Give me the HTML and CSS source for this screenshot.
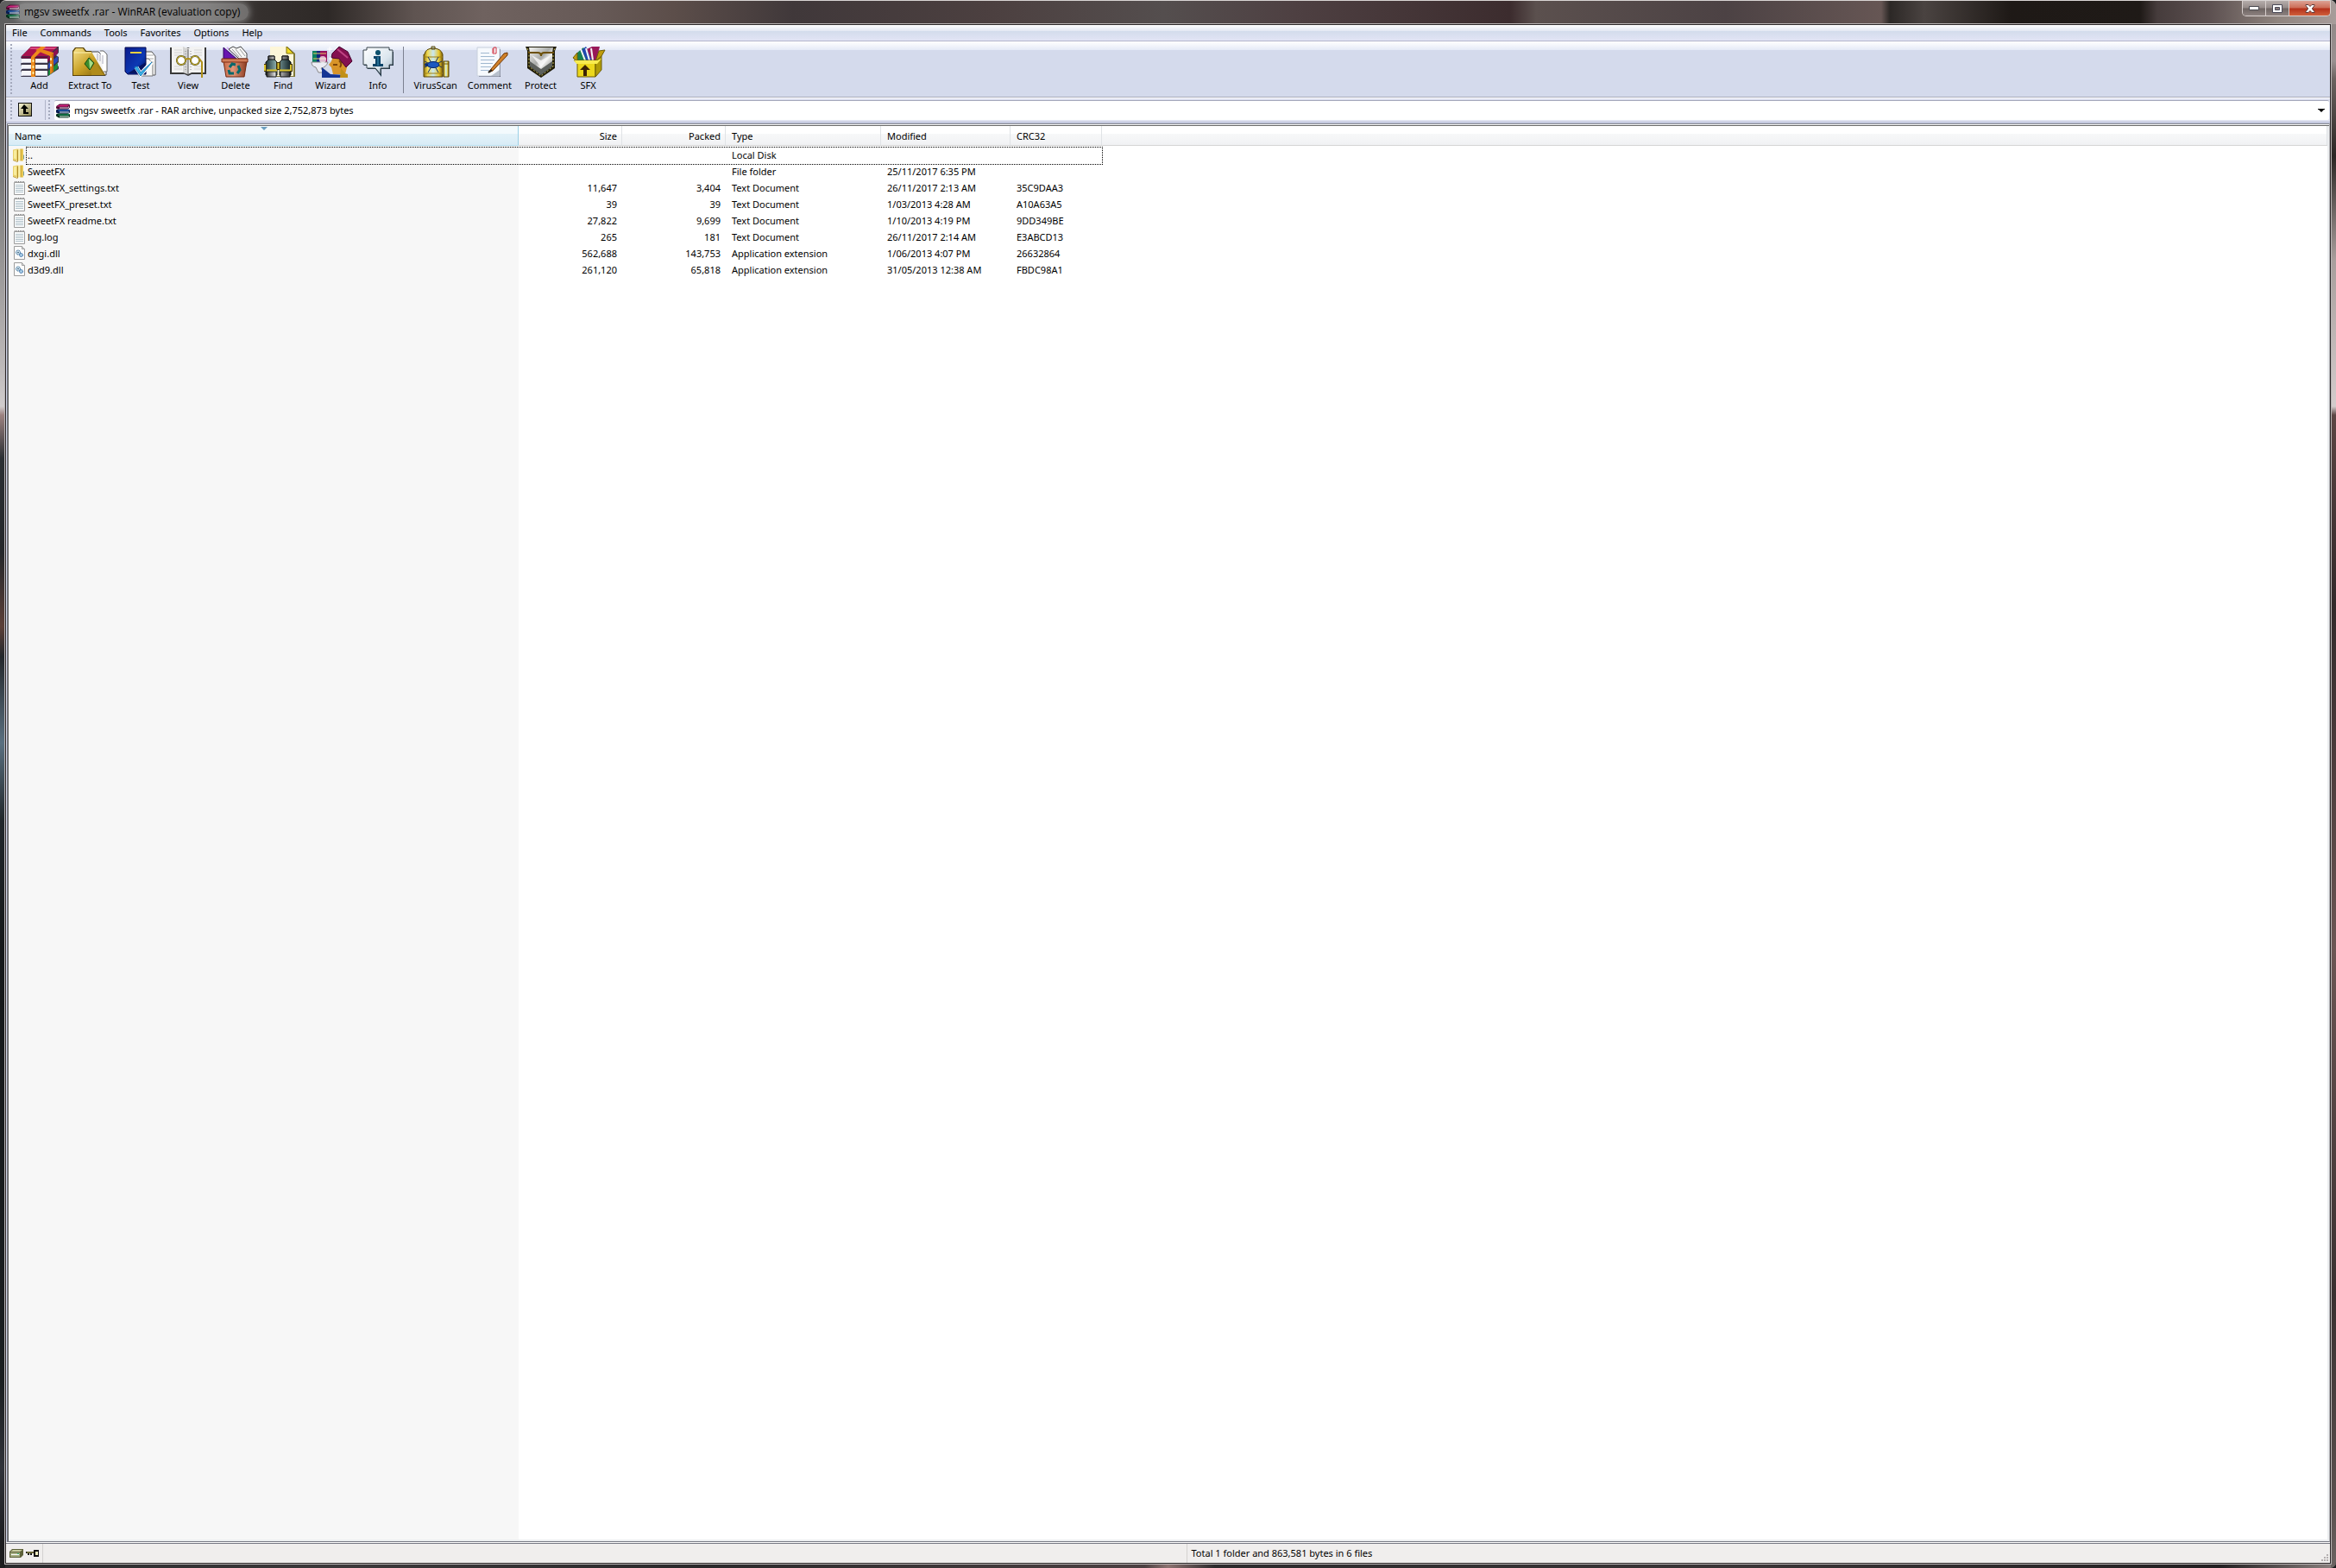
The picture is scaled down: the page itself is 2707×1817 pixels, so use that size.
FILE: index.html
```html
<!DOCTYPE html>
<html lang="en">
<head>
<meta charset="utf-8">
<title>mgsv sweetfx .rar - WinRAR (evaluation copy)</title>
<link rel="stylesheet" href="styles.css">
</head>
<body>
<svg class="defs" aria-hidden="true">
  <defs>
    <linearGradient id="gold" x1="0" x2="1" y1="0" y2="1"><stop offset="0" stop-color="#f6e08a"/><stop offset=".5" stop-color="#c9a227"/><stop offset="1" stop-color="#7a5c08"/></linearGradient>
    <linearGradient id="navy" x1="0" x2="1" y1="0" y2="1"><stop offset="0" stop-color="#0a1a8c"/><stop offset=".6" stop-color="#0c39b4"/><stop offset="1" stop-color="#04105c"/></linearGradient>
    <linearGradient id="tank" x1="0" x2="1"><stop offset="0" stop-color="#8c6f0a"/><stop offset=".2" stop-color="#f0d850"/><stop offset=".5" stop-color="#c8e8f4"/><stop offset=".8" stop-color="#e8c830"/><stop offset="1" stop-color="#806008"/></linearGradient>
    <linearGradient id="steel" x1="0" x2="1" y1="0" y2="1"><stop offset="0" stop-color="#f4f4f2"/><stop offset=".45" stop-color="#a9aba8"/><stop offset=".6" stop-color="#f0f0ee"/><stop offset="1" stop-color="#5c5e5a"/></linearGradient>
    <linearGradient id="lens" x1="0" x2="1"><stop offset="0" stop-color="#1c3236"/><stop offset=".4" stop-color="#86a8a8"/><stop offset="1" stop-color="#142428"/></linearGradient>
    <linearGradient id="cap" x1="0" x2="1"><stop offset="0" stop-color="#333"/><stop offset=".4" stop-color="#eee"/><stop offset="1" stop-color="#333"/></linearGradient>
    <linearGradient id="bin" x1="0" x2="1"><stop offset="0" stop-color="#c96a48"/><stop offset=".4" stop-color="#e0977a"/><stop offset="1" stop-color="#8c3a20"/></linearGradient>
    <linearGradient id="bubble" x1="0" x2="1" y1="0" y2="1"><stop offset="0" stop-color="#fff"/><stop offset=".6" stop-color="#dbe6ee"/><stop offset="1" stop-color="#9fb4c4"/></linearGradient>
    <linearGradient id="folder" x1="0" x2="1"><stop offset="0" stop-color="#f0dc80"/><stop offset=".45" stop-color="#fdf6b8"/><stop offset=".55" stop-color="#cfa832"/><stop offset="1" stop-color="#f3d868"/></linearGradient>
    <linearGradient id="olive" x1="0" x2="1" y1="0" y2="1"><stop offset="0" stop-color="#fbf8d8"/><stop offset="1" stop-color="#8c8450"/></linearGradient>
  </defs>
  <symbol id="rar" viewBox="0 0 16 16">
    <path d="M1 2L4 0h11l1 1v3l-2 2H2L0 5V3z" fill="#4c0830"/><path d="M2 2l3-1h10l-2 2H1z" fill="#d0207c"/><path d="M4 4h10l1-2v2l-1 1H4z" fill="#e8dce8"/>
    <path d="M2 6h12l2 1v3l-2 1H3L0 10V7z" fill="#081c50"/><path d="M3 7h10l2-1v1l-1 1H2z" fill="#2878d8"/><path d="M4 9h11v1H4z" fill="#e4f0fc"/>
    <path d="M2 11h12l2 1v3l-2 1H3L0 14v-2z" fill="#04301c"/><path d="M3 12h10l2-1v1l-1 1H2z" fill="#18a060"/><path d="M4 14h11v1H4z" fill="#e0f8ec"/>
  </symbol>
  <symbol id="dir" viewBox="0 0 14 16">
    <path d="M0 2l5-1v14l-5-1z" fill="#e9d06c"/><path d="M1 3l3-1v11l-3-1z" fill="#f8ec9c"/><path d="M5 1h7v14H6l-1 1z" fill="url(#folder)"/><path d="M5.500 2v14" stroke="#b08c28"/><path d="M12 8h1v5h-1z" fill="#7aa0a0"/><path d="M0 14l5 2" stroke="#c0a040"/>
  </symbol>
  <symbol id="txt" viewBox="0 0 14 17">
    <path d="M1.500 2.500h12v14h-12z" fill="#f8fafb" stroke="#9c9c9c"/><path d="M2 1.500h11" stroke="#777" stroke-dasharray="1 1"/><path d="M3 5.500h9M3 7.500h9M3 9.500h9M3 11.500h9M3 13.500h9" stroke="#b4c4cc"/>
  </symbol>
  <symbol id="dll" viewBox="0 0 14 17">
    <path d="M1.500.500h9l3 3v12h-12z" fill="#fbfbfb" stroke="#9c9c9c"/><path d="M10.500.500v3h3" fill="#ddd" stroke="#9c9c9c"/><circle cx="6" cy="7.500" r="2.500" fill="#cfe2ee" stroke="#2d6590" stroke-dasharray="1.300 .5"/><circle cx="6" cy="7.500" r=".8" fill="#204868"/><circle cx="9.500" cy="10.500" r="2" fill="#a8cce4" stroke="#2860a0"  stroke-dasharray="1.300 .5"/>
  </symbol>
</svg>

<div class="window">
  <header class="titlebar">
    <svg class="app-icon"><use href="#rar"/></svg>
    <h1 class="title">mgsv sweetfx .rar - WinRAR (evaluation copy)</h1>
    <div class="controls">
      <button class="control" aria-label="Minimize"><svg width="12" height="5"><path d="M.5.500h11v4H.5z" fill="#fff" stroke="#4a4a50"/></svg></button>
      <button class="control" aria-label="Restore"><svg width="12" height="10"><path d="M.5.500h11v9H.5z" fill="#fff" stroke="#4a4a58"/><path d="M3.500 3.500h5v3h-5z" fill="#887c7c" stroke="#4a4a58"/></svg></button>
      <button class="control close" aria-label="Close"><svg width="12" height="10"><path d="M1 .500h3l2 2 2-2h3v1L8.300 5 11 8.500v1H8l-2-2-2 2H1v-1L3.700 5 1 1.500z" fill="#fff" stroke="#5a3838"/></svg></button>
    </div>
  </header>

  <div class="client">
    <nav class="menubar">
      <button>File</button><button>Commands</button><button>Tools</button><button>Favorites</button><button>Options</button><button>Help</button>
    </nav>

    <div class="toolbar" role="toolbar">
      <span class="grip"></span>
      <button class="tool"><svg viewBox="0 0 44 36">
        <path d="M0 12L12 0h32v7l-3 3 3 2v6l-3 3 3 2v3L30 35H0l2-3-2-4 2-3-2-5 2-3z" fill="#3a3648"/>
        <path d="M1 11L12 0h31L31 11z" fill="#a8124e"/><path d="M12 1h30l-3 2H10z" fill="#d84880"/>
        <path d="M1 14h30v5H1zM1 21h30v5H1zM1 28h30v6H1z" fill="#f6f6fa"/><path d="M2 18.500h29M2 25.500h29M2 33.500h29" stroke="#c0c0d0"/>
        <path d="M31 12L43 2v6L31 18z" fill="#8c1050"/><path d="M1 12.500h30" stroke="#70083c" stroke-width="2"/><path d="M32 20l11-9v6l-11 9z" fill="#2a4ab8"/><path d="M32 28l11-9v6l-11 9z" fill="#1c8a3c"/>
        <path d="M12 12L23 0h6L17 12v23h-5z" fill="#f08c1c"/><path d="M16.500 12v22" stroke="#9c4c04"/><path d="M17 4l4-2 17 5v22l-4 3V11z" fill="#e88418"/><path d="M37 8v21" stroke="#a45404"/>
        <path d="M14.500 15v3M14.500 22v3M14.500 29v3M35 13v3M35 20v3" stroke="#fce8a0" stroke-width="2"/></svg>Add</button>
      <button class="tool"><svg viewBox="0 0 44 36">
        <path d="M2 34V5l3-4h10l3 4h6v5h6l10-4v28z" fill="#5c4404"/><path d="M24 6h8l3 3h6v24H24z" fill="#f4f4f4" stroke="#444"/><path d="M34 5h4l4 4v20h-4" fill="#fff" stroke="#666"/><path d="M31 8v8M34 9v8M37 10v10" stroke="#aab"/>
        <path d="M3 33V6l3-4h8l3 4h7l16 27z" fill="url(#gold)"/><path d="M4 7h20" stroke="#fbf0b0"/><path d="M21 10l18 23H24" fill="#b08c1c"/><path d="M21 13l6 6-5 8-6-7z" fill="#3c8c2c" stroke="#1c4c10"/><path d="M21 14l1 12 4-7z" fill="#a8dc88"/></svg>Extract To</button>
      <button class="tool"><svg viewBox="0 0 44 36">
        <path d="M26 6h9l4 5v22H26z" fill="#fff" stroke="#555"/><path d="M29 10h8M29 14h8M29 18h8" stroke="#aaa"/><path d="M22 14h9l5 5v15H20z" fill="#f8f8f8" stroke="#777"/>
        <path d="M4 1h24v31H7l-3-3z" fill="url(#navy)" stroke="#04084c"/><path d="M7 31h21V18z" fill="#061460"/><path d="M10 7h13" stroke="#e8d040" stroke-width="2"/>
        <path d="M17 24l5 8 13-14" fill="none" stroke="#fff" stroke-width="5"/><path d="M15 24l3-1 4 7 13-12-13 16z" fill="#3cb4e8" stroke="#1880c0"/></svg>Test</button>
      <button class="tool"><svg viewBox="0 0 44 36">
        <path d="M1 1v31h17l4 2 4-2h17V1z" fill="#383838"/><path d="M3 0h15l4 2 4-2h15v30H26l-4 2-4-2H3z" fill="#f2f2f2"/><path d="M16 0l6 3v29l-6-2z" fill="#d4d4d4"/><path d="M22 3v30" stroke="#555"/><path d="M25 5v24M19 5v24" stroke="#888" stroke-dasharray="1 2"/><path d="M6 4h9M6 7h9M6 10h9M29 4h9M29 7h9M29 10h9M6 23h9M6 26h9M29 23h9M29 26h9" stroke="#d4d4d4"/>
        <circle cx="14" cy="16" r="5" fill="#fff" stroke="#403808" stroke-width="2"/><circle cx="30" cy="16" r="5" fill="#fff" stroke="#403808" stroke-width="2"/><circle cx="14" cy="16" r="5" fill="none" stroke="#e0c838"/><circle cx="30" cy="16" r="5" fill="none" stroke="#e0c838"/><path d="M19 15q3-2 6 0M35 14l3 4v18" fill="none" stroke="#b09018" stroke-width="2"/></svg>View</button>
      <button class="tool"><svg viewBox="0 0 44 36">
        <path d="M8 14V1l15 13z" fill="#6814b0" stroke="#2c0460"/><path d="M12 1l14 12" stroke="#d8b0f8" stroke-width="2"/><path d="M14 3l5-3 4 2 5-2 7 8v6H26z" fill="#f6f6f6" stroke="#444"/><path d="M18 3l8 9M22 3l7 9M27 3l6 8" stroke="#999"/>
        <path d="M8 17h27l-3 18H11z" fill="url(#bin)" stroke="#702810"/><path d="M6 14h30v4H6z" fill="#d07c58" stroke="#802c14"/><path d="M15 24l3-4 4 1M25 22l2 5-3 4M20 31h-5l-1-4" fill="none" stroke="#08686c" stroke-width="3"/></svg>Delete</button>
      <button class="tool"><svg viewBox="0 0 44 36">
        <path d="M7 0h20l9 8v27H7z" fill="#807838"/><path d="M7 0h19l8 8v26H7z" fill="#fdf6d8"/><path d="M26 0v8h8z" fill="#f0dc20" stroke="#807010"/>
        <path d="M5 11h7v4l3 3v15H2V18l3-3zM21 11h7v4l3 3v15H18V18l3-3z" fill="url(#lens)" stroke="#0c1010"/><path d="M5 11h7v4H5zM21 11h7v4h-7zM3 29h11v6H3zM19 29h11v6H19z" fill="url(#cap)" stroke="#111"/><path d="M0 20h3v9H0zM30 20h3v9h-3zM14 18h5v9h-5z" fill="#3c3008"/><path d="M1 21v7M31 21v7M3 27.500h12M18 27.500h12M16.500 19v7" stroke="#dcc430" stroke-width="2"/></svg>Find</button>
      <button class="tool"><svg viewBox="0 0 44 36">
        <path d="M1 5h5v13H1z" fill="#088060"/><path d="M6 5h4v13H6z" fill="#102880"/><path d="M10 5h8v13h-8z" fill="#98105c"/><path d="M2 8h15M2 14h15" stroke="#e8c860"/><path d="M0 18h19q-2 6-8 7l3 5H8L5 24q-5-1-5-6z" fill="#ececf4" stroke="#888"/><circle cx="13" cy="15" r="4" fill="#fff" opacity=".7"/>
        <path d="M25 11l13-1 4 10-3 12H25l-2-8-3-3 3-4z" fill="#d89428"/><path d="M32 16q4 4 1 8M25 21h5" stroke="#7c4408" fill="none" stroke-width="2"/><path d="M24 8l8-8 10 6 5 11-7 7-8-10-9-1z" fill="#841050" stroke="#480430"/><path d="M30 3l12 10" stroke="#c04484" stroke-width="2"/>
        <path d="M12 24l10 8 20 1v3H12z" fill="#143494"/><path d="M34 25l5 6 3 1v4h-9z" fill="#c09018"/><path d="M21 0v6M18 3h6M22 12v4M20 14h4" stroke="#fff"/></svg>Wizard</button>
      <button class="tool"><svg viewBox="0 0 44 36">
        <path d="M10 3h26v3h4v16h-4v4H26v9l-7-9h-9v-4H6V6h4z" fill="#203848"/><path d="M9 1h26v3h4v17h-4v4H25v7l-6-7H9v-4H5V4h4z" fill="url(#bubble)" stroke="#38444c"/><circle cx="22" cy="7" r="3" fill="#0c506c"/><path d="M17 11h8v9h3v3H16v-3h3v-6h-2z" fill="#0c4468"/><path d="M22 12v10" stroke="#3c98bc"/></svg>Info</button>
      <span class="separator"></span>
      <button class="tool"><svg viewBox="0 0 44 36">
        <path d="M17 0h4v3h-4zM9 9q1-7 10-7t11 7v26H8V9z" fill="url(#tank)" stroke="#584404"/><path d="M8 12h22M8 31h22" stroke="#a08010"/><path d="M31 17h6v18h-6z" fill="url(#tank)" stroke="#584404"/><path d="M31 20h6" stroke="#705404"/>
        <path d="M13 12l4 7M25 12l-4 7M9 17l6 3M29 17l-6 3M9 24l6-3M29 24l-6-3M13 30l4-7M25 30l-4-7" stroke="#183060"/><ellipse cx="19" cy="21" rx="7" ry="3.500" fill="#1c58c0" stroke="#082468"/><circle cx="11" cy="21" r="2" fill="#0c2c70"/></svg>VirusScan</button>
      <button class="tool"><svg viewBox="0 0 44 36">
        <path d="M10 3h25v32H10z" fill="#606478"/><path d="M8 1h26v33H8z" fill="#f6f9fd" stroke="#c8d0dc"/><path d="M12 7.500h10M12 11.500h16M12 15.500h16M12 19.500h14M12 23.500h12M12 27.500h10" stroke="#a0b8d0"/><path d="M27 7V1h3v7h-4V2" fill="none" stroke="#d03040"/><path d="M24 26l15-18 4-1v3L26 28l-5 2z" fill="#d08028" stroke="#6c3404"/><path d="M21 30l4-3" stroke="#222" stroke-width="2"/><path d="M24 34l10-7v7z" fill="#b8c0cc"/></svg>Comment</button>
      <button class="tool"><svg viewBox="0 0 44 36">
        <path d="M4 0h36l-2 5v20L22 36 6 25V5z" fill="#201c08"/><path d="M6 2l2 5v16l14 11 14-11V7l2-5" fill="none" stroke="#c8bc58" stroke-dasharray="2 2"/><path d="M8 1h28l-1 6v15L22 32 9 22V7z" fill="url(#steel)"/><path d="M9 17l13 9 13-9v6L22 33 9 23z" fill="#5c605c"/><path d="M11 10l11 14 11-14-11 6z" fill="#fafafa" opacity=".8"/><path d="M7 7h11q4 0 4 4 0-4 4-4h11" fill="none" stroke="#6c5008" stroke-width="2"/></svg>Protect</button>
      <button class="tool"><svg viewBox="0 0 44 36">
        <path d="M9 16V7l7-6 10 15z" fill="#168050"/><path d="M14 4l5-4 9 16h-8z" fill="#2048b0"/><path d="M20 3l6-3h9l-4 16h-5z" fill="#981858"/><path d="M13 3l5 13M19 2l4 14M25 2l2 14" stroke="#f4f4f4" stroke-width="2"/>
        <path d="M5 16h25v19H9V20z" fill="#ecd81c" stroke="#6c5c04"/><path d="M30 18l7-7v16l-7 8z" fill="#b09c08" stroke="#6c5c04"/><path d="M9 17L4 13l5-6v9zM30 17l4-12 7-1-4 7z" fill="#c09c0c" stroke="#6c5c04"/><path d="M5 16l3 4h24l5-6-5 2z" fill="#f8ec50"/><path d="M18 21l6 6h-4v7h-4v-7h-4z" fill="#3c2404"/></svg>SFX</button>
    </div>

    <div class="addressbar">
      <span class="grip"></span>
      <button class="up" aria-label="Up one folder"><svg width="16" height="16"><path d="M0 0h16v16H0z" fill="#111"/><path d="M1 1h14v14H1z" fill="url(#olive)"/><path d="M7 2l5 5H9v4h3v2H6V7H3z" fill="#000"/></svg></button>
      <span class="grip second"></span>
      <div class="path">
        <svg class="app-icon"><use href="#rar"/></svg>
        <select aria-label="Current archive"><option>mgsv sweetfx .rar - RAR archive, unpacked size 2,752,873 bytes</option></select>
        <svg class="arrow" width="8" height="4"><path d="M0 0h8v1H7L4 4 1 1H0z"/></svg>
      </div>
    </div>

    <main class="list">
      <table>
        <colgroup><col class="c-name"><col class="c-num"><col class="c-num"><col class="c-type"><col class="c-date"><col class="c-crc"><col></colgroup>
        <thead><tr><th class="sorted">Name<svg class="sort" width="8" height="4"><path d="M0 0h8L4 4z" fill="#6d9fc0"/></svg></th><th class="num">Size</th><th class="num">Packed</th><th>Type</th><th>Modified</th><th>CRC32</th><th></th></tr></thead>
        <tbody>
          <tr class="focused"><td><span class="file"><svg><use href="#dir"/></svg>..</span></td><td></td><td></td><td>Local Disk</td><td></td><td></td><td></td></tr>
          <tr><td><span class="file"><svg><use href="#dir"/></svg>SweetFX</span></td><td></td><td></td><td>File folder</td><td>25/11/2017 6:35 PM</td><td></td><td></td></tr>
          <tr><td><span class="file"><svg><use href="#txt"/></svg>SweetFX_settings.txt</span></td><td class="num">11,647</td><td class="num">3,404</td><td>Text Document</td><td>26/11/2017 2:13 AM</td><td>35C9DAA3</td><td></td></tr>
          <tr><td><span class="file"><svg><use href="#txt"/></svg>SweetFX_preset.txt</span></td><td class="num">39</td><td class="num">39</td><td>Text Document</td><td>1/03/2013 4:28 AM</td><td>A10A63A5</td><td></td></tr>
          <tr><td><span class="file"><svg><use href="#txt"/></svg>SweetFX readme.txt</span></td><td class="num">27,822</td><td class="num">9,699</td><td>Text Document</td><td>1/10/2013 4:19 PM</td><td>9DD349BE</td><td></td></tr>
          <tr><td><span class="file"><svg><use href="#txt"/></svg>log.log</span></td><td class="num">265</td><td class="num">181</td><td>Text Document</td><td>26/11/2017 2:14 AM</td><td>E3ABCD13</td><td></td></tr>
          <tr><td><span class="file"><svg><use href="#dll"/></svg>dxgi.dll</span></td><td class="num">562,688</td><td class="num">143,753</td><td>Application extension</td><td>1/06/2013 4:07 PM</td><td>26632864</td><td></td></tr>
          <tr><td><span class="file"><svg><use href="#dll"/></svg>d3d9.dll</span></td><td class="num">261,120</td><td class="num">65,818</td><td>Application extension</td><td>31/05/2013 12:38 AM</td><td>FBDC98A1</td><td></td></tr>
        </tbody>
      </table>
    </main>

    <footer class="statusbar">
      <div class="status-icons">
        <svg width="16" height="12"><path d="M0 4l3-3h13v7l-3 3H0z" fill="#5c6038"/><path d="M1 4l3-2h11l-3 2z" fill="#c8cca0"/><path d="M1 5h11v5H1z" fill="#a4ac80"/><path d="M2 7h9v1H2z" fill="#fff"/><path d="M9 6h2v1H9z" fill="#20a060"/></svg>
        <svg width="16" height="12"><path d="M0 4h9V2h6v8H9V6H7v2H5V6H4v2H2V6H0z" fill="#111"/><path d="M11 4h3v4h-3z" fill="#f0ecc0"/><path d="M1 5h8" stroke="#c8c060"/></svg>
      </div>
      <div class="status-cell"></div>
      <div class="status-cell">Total 1 folder and 863,581 bytes in 6 files</div>
      <svg class="sizegrip" width="9" height="9"><path d="M6 0h2v2H6zM3 3h2v2H3zM6 3h2v2H6zM0 6h2v2H0zM3 6h2v2H3zM6 6h2v2H6z" fill="#b4b0b0"/></svg>
    </footer>
  </div>
</div>
</body>
</html>
```
FILE: styles.css
```css
* { box-sizing: border-box; }

body {
  margin: 0;
  font: 11px/16px "Noto Sans", "Open Sans", sans-serif;
  color: #000;
  background: #1c1c1e;
}

button, select {
  font: inherit;
  color: inherit;
  margin: 0;
  padding: 0;
  border: 0;
  background: none;
}

.defs { position: absolute; width: 0; height: 0; }

/* Glass frame */
.window {
  min-height: 100vh;
  display: flex;
  flex-direction: column;
  padding: 0 6px 5px 6px;
  border-radius: 7px;
  border-top: 1px solid #d9d5d4;
  background:
    linear-gradient(#666 0, #555 70px, #777 200px, #bcb8b8 420px, #d0cccc 470px, #9c8280 480px, #2c3034 530px, #25282b 640px, #5c4038 725px, #24282c 760px, #5a7080 860px, #22282b 950px, #16191b 1100px, #1b1f21 1600px, #30333a 1700px, #1c1c1e 1790px) left top / 6px 100% no-repeat,
    linear-gradient(#8f8583 0, #999090 70px, #6c6360 90px, #2c2624 180px, #a89e9c 300px, #d4cccc 470px, #5c4644 480px, #33292a 700px, #6c5654 1100px, #3a3030 1500px, #5c5250 1750px, #6c6462 1817px) right top / 6px 100% no-repeat,
    linear-gradient(90deg, #2a2a2c 0, #3c383a 15%, #2a282a 30%, #4c4042 49%, #8c7270 50%, #2c2a2c 52%, #3a3436 75%, #221e20 95%, #8c8280 100%) left bottom / 100% 5px no-repeat,
    #2c2828;
}

.titlebar {
  display: flex;
  align-items: flex-start;
  height: 27px;
  margin: 0 -6px;
  padding: 0 6px 0 7px;
  border-radius: 6px 6px 0 0;
  background: linear-gradient(90deg, #5e5e5e 0, #707070 110px, #5c5a59 240px, #35302e 300px, #2e2927 380px, #5f5451 480px, #6f625f 560px, #675a57 690px, #5c4e4a 780px, #40383a 920px, #4c4040 1150px, #544e4e 1350px, #4e4042 1500px, #3c2c2e 1750px, #5b504e 1780px, #4c4244 2000px, #665654 2180px, #2c2826 2190px, #4a4341 2230px, #1e1916 2330px, #1f1a17 2480px, #463c3c 2500px, #5c5050 2560px, #90857f 2640px, #a79c9a 100%);
}

.app-icon { width: 16px; height: 17px; flex: none; }
.titlebar .app-icon { margin-top: 4px; }

.title {
  margin: 3px 0 0 -5px;
  padding: 1px 10px;
  border-radius: 10px;
  font: 12px/18px "Open Sans", sans-serif;
  background: rgba(190, 190, 190, .4);
  box-shadow: 0 0 6px 2px rgba(190, 190, 190, .4);
  white-space: nowrap;
}

.controls {
  display: flex;
  margin-left: auto;
  border: 1px solid #d8d0ce;
  border-top: 0;
  border-radius: 0 0 5px 5px;
  overflow: hidden;
}
.control {
  width: 27px;
  height: 17px;
  display: flex;
  align-items: center;
  justify-content: center;
  border-right: 1px solid #d8d0ce;
  background: linear-gradient(#b5adab 0, #958b89 8px, #6d6462 9px, #8d8280 100%);
}
.control.close {
  width: 47px;
  border: 0;
  background: linear-gradient(#dca294 0, #cc6c56 8px, #b4301a 9px, #d0603c 100%);
}

.client {
  flex: 1;
  display: flex;
  flex-direction: column;
  border: 1px solid #2a2526;
  outline: 1px solid #b8b4b4;
  background: #d5daec;
}

/* Menu and toolbars */
.menubar {
  display: flex;
  gap: 15px;
  height: 19px;
  padding-left: 7px;
  border-bottom: 1px solid #b3b5cb;
  background: linear-gradient(#fff 0, #e2e7f3 7px, #d3dcec 7px, #e2e4f5 100%);
}

.toolbar {
  display: flex;
  height: 65px;
  padding: 6px 0 0 5px;
  border-bottom: 1px solid #a9acbb;
  background: linear-gradient(#fff 0, #e5eaf7 10px, #d4daec 10px);
}
.grip {
  width: 6px;
  background: repeating-linear-gradient(#a4a9bc 0 2px, transparent 2px 4px) left top / 2px 100% no-repeat;
}
.toolbar .grip { margin: -3px 0 2px; }
.tool {
  min-width: 55px;
  padding: 0 6px;
  display: flex;
  flex-direction: column;
  align-items: center;
}
.tool svg { width: 44px; height: 36px; margin: 0 -6px 1px; overflow: visible; }
.separator { width: 1px; height: 54px; margin: 0 6px 0 1px; background: #7c8090; }

.addressbar {
  display: flex;
  align-items: stretch;
  height: 29px;
  padding: 2px 0 2px 5px;
  border-top: 1px solid #fff;
  border-bottom: 1px solid #b5b9d2;
  background: #dfe2f1;
}
.up { display: flex; width: 35px; padding: 3px 0 0 3px; border-right: 1px solid #b0b4c8; }
.grip.second { margin-left: 3px; width: 7px; }
.path {
  flex: 1;
  display: flex;
  align-items: center;
  margin-right: 1px;
  padding: 0 5px 0 2px;
  border-top: 1px solid #a4a7ba;
  border-radius: 2px;
  background: #fff;
}
.path select { flex: 1; appearance: none; margin-left: 5px; height: 20px; outline: 0; }

/* File list */
.list {
  flex: 1;
  margin: 1px 0 0 1px;
  padding: 2px 2px 2px 1px;
  border: 1px solid #777983;
  border-right-color: #b8b8bc;
  background: linear-gradient(#f7f7f7, #f7f7f7) 1px 0 / 591px 100% no-repeat, #fff;
  box-shadow: inset 0 1px 0 #fff, inset 1px 2px 0 #666, inset -2px -2px 0 #eceef0;
}
table {
  width: 100%;
  table-layout: fixed;
  border-collapse: collapse;
}
.c-name { width: 591px; }
.c-num { width: 120px; }
.c-type { width: 180px; }
.c-date { width: 150px; }
.c-crc { width: 106px; }

th {
  height: 24px;
  padding: 0 6px 0 7px;
  font-weight: 400;
  text-align: left;
  background:
    linear-gradient(#e0e3e6, #e0e3e6) right top / 1px 22px no-repeat,
    linear-gradient(#fff 0 9px, #f7f8f9 9px, #f1f2f4 22px, #d5d5d5 22px 23px, #fff 23px);
}
th.sorted {
  position: relative;
  background:
    linear-gradient(#9bd0e6, #9bd0e6) right top / 1px 22px no-repeat,
    linear-gradient(#f3fafd 0 9px, #e3f2f9 9px, #d8ecf6 22px, #b4dcec 22px 23px, #f7f7f7 23px);
}
.sort { position: absolute; top: 1px; left: 50%; margin-left: -4px; }

td { height: 19px; padding: 0 6px 0 7px; white-space: nowrap; }
td:first-child { padding-left: 5px; }
.num { text-align: right; }

.file { display: flex; align-items: center; gap: 3px; }
.file svg { width: 14px; height: 17px; flex: none; }

/* Focus rectangle across the described columns of the current row */
.focused td:first-child { position: relative; }
.focused td:first-child::after {
  content: "";
  position: absolute;
  left: 20px;
  top: 0;
  width: 1246px;
  height: 19px;
  border: 1px dotted #000;
}

.statusbar {
  display: flex;
  height: 23px;
  margin-top: 1px;
  border-top: 1px solid #777983;
  box-shadow: 0 -1px 0 #fff;
  background: #f0eeed;
  position: relative;
}
.status-icons { display: flex; align-items: center; gap: 3px; width: 42px; padding-left: 4px; }
.status-cell { flex: 1; padding: 3px 5px 0; border-left: 1px solid #d4d2d0; }
.sizegrip { position: absolute; right: 1px; bottom: 1px; }
```
